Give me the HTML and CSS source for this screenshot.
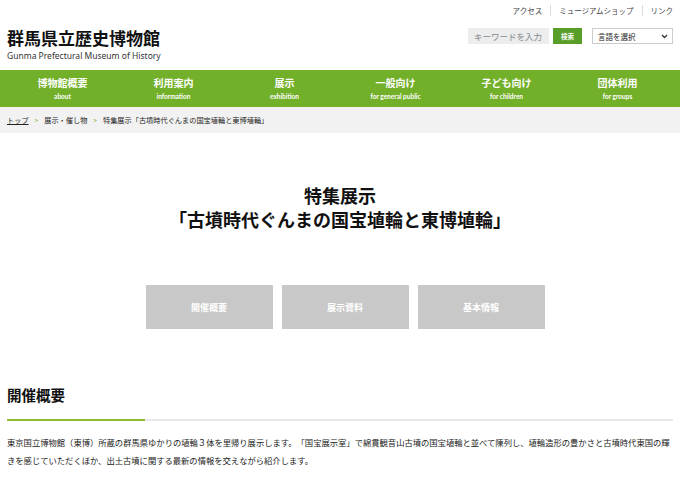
FILE: index.html
```html
<!DOCTYPE html>
<html lang="ja">
<head>
<meta charset="utf-8">
<title>群馬県立歴史博物館</title>
<link rel="stylesheet" href="styles.css">
</head>
<body>
<header class="site-header">
  <div class="logo">
    <div class="logo-ja">群馬県立歴史博物館</div>
    <div class="logo-en">Gunma Prefectural Museum of History</div>
  </div>
  <div class="header-right">
    <ul class="util-links">
      <li>アクセス</li>
      <li>ミュージアムショップ</li>
      <li>リンク</li>
    </ul>
    <div class="tools">
      <div class="search-box">キーワードを入力</div>
      <div class="search-btn">検索</div>
      <div class="lang-select"><span>言語を選択</span><svg width="7" height="5" viewBox="0 0 7 5"><path d="M1 1 L3.5 3.5 L6 1" fill="none" stroke="#333" stroke-width="1.3"/></svg></div>
    </div>
  </div>
</header>
<nav class="gnav">
  <div class="gnav-item"><span class="ja">博物館概要</span><span class="en">about</span></div>
  <div class="gnav-item"><span class="ja">利用案内</span><span class="en">information</span></div>
  <div class="gnav-item"><span class="ja">展示</span><span class="en">exhibition</span></div>
  <div class="gnav-item"><span class="ja">一般向け</span><span class="en">for general public</span></div>
  <div class="gnav-item"><span class="ja">子ども向け</span><span class="en">for children</span></div>
  <div class="gnav-item"><span class="ja">団体利用</span><span class="en">for groups</span></div>
</nav>
<div class="breadcrumb">
  <span class="bc-link">トップ</span><span class="bc-sep">&gt;</span><span>展示・催し物</span><span class="bc-sep">&gt;</span><span>特集展示「古墳時代ぐんまの国宝埴輪と東博埴輪」</span>
</div>
<main>
  <h1 class="page-title">特集展示<br>「古墳時代ぐんまの国宝埴輪と東博埴輪」</h1>
  <div class="tabs">
    <div class="tab">開催概要</div>
    <div class="tab">展示資料</div>
    <div class="tab">基本情報</div>
  </div>
  <section class="section">
    <h2 class="section-title">開催概要</h2>
    <div class="section-rule"><span class="rule-accent"></span></div>
    <p class="section-text">東京国立博物館（東博）所蔵の群馬県ゆかりの埴輪３体を里帰り展示します。「国宝展示室」で綿貫観音山古墳の国宝埴輪と並べて陳列し、埴輪造形の豊かさと古墳時代東国の輝きを感じていただくほか、出土古墳に関する最新の情報を交えながら紹介します。</p>
  </section>
</main>
</body>
</html>
```
FILE: styles.css
```css
* { box-sizing: border-box; }
body {
  margin: 0;
  font-family: "Noto Sans CJK JP", "Noto Sans", sans-serif;
  color: #222;
  background: #fff;
  text-spacing-trim: space-all;
}
.site-header {
  height: 70px;
  padding: 0 7px;
  display: flex;
  justify-content: space-between;
}
.logo { padding-top: 28px; }
.logo-ja {
  font-size: 17px;
  font-weight: 700;
  line-height: 20px;
  color: #111;
}
.logo-en {
  font-family: "Noto Sans", sans-serif;
  font-size: 8.5px;
  line-height: 12px;
  margin-top: 2px;
  color: #333;
  letter-spacing: 0;
}
.header-right {
  display: flex;
  flex-direction: column;
  align-items: flex-end;
}
.util-links {
  list-style: none;
  margin: 0;
  padding: 5px 0 0;
  display: flex;
  font-size: 7.5px;
  line-height: 11px;
  color: #444;
}
.util-links li { padding: 0 8px; border-left: 1px solid #ddd; }
.util-links li:first-child { border-left: 0; }
.util-links li:last-child { padding-right: 0; }
.tools {
  display: flex;
  align-items: center;
  margin-top: 12px;
}
.search-box {
  width: 81px;
  height: 16px;
  background: #ebedef;
  color: #888;
  font-size: 8.5px;
  line-height: 16px;
  padding-left: 6px;
}
.search-btn {
  width: 29px;
  height: 16px;
  margin-left: 4px;
  background: #5a9e2a;
  color: #fff;
  font-size: 6.5px;
  font-weight: 700;
  line-height: 16px;
  text-align: center;
}
.lang-select {
  width: 81px;
  height: 16px;
  margin-left: 10px;
  border: 1px solid #ccc;
  display: flex;
  align-items: center;
  justify-content: space-between;
  padding: 0 4px 0 5px;
  font-size: 7.5px;
  color: #222;
}
.gnav {
  height: 37px;
  background: #73b02a;
  display: grid;
  grid-template-columns: repeat(6, 1fr);
  padding: 0 7px;
}
.gnav-item {
  display: flex;
  flex-direction: column;
  align-items: center;
  justify-content: center;
  color: #fff;
}
.gnav-item .ja { font-size: 10px; font-weight: 700; line-height: 14px; }
.gnav-item .en { font-family: "Lato", sans-serif; font-size: 6.5px; line-height: 10px; margin-top: 2px; font-weight: 700; }
.breadcrumb {
  height: 26px;
  background: #f2f2f2;
  padding: 0 7px;
  display: flex;
  align-items: center;
  font-size: 7.2px;
  color: #222;
}
.bc-link { text-decoration: underline; }
.bc-sep { color: #73b02a; margin: 0 6px; font-size: 6.5px; }
main { padding: 0 7px; }
.page-title {
  margin: 50px 0 0;
  text-align: center;
  font-size: 18px;
  font-weight: 700;
  line-height: 24px;
  color: #111;
}
.tabs {
  display: flex;
  justify-content: center;
  gap: 9px;
  margin: 54px 0 0 10px;
}
.tab {
  width: 127px;
  height: 44px;
  background: #c8c8c8;
  color: #fff;
  font-size: 9px;
  font-weight: 700;
  display: flex;
  align-items: center;
  justify-content: center;
}
.section { margin-top: 55px; }
.section-title {
  margin: 0;
  font-size: 14.5px;
  font-weight: 700;
  line-height: 22px;
  color: #111;
}
.section-rule {
  margin-top: 13px;
  height: 2px;
  background: #e8e8e8;
}
.rule-accent {
  display: block;
  width: 138px;
  height: 2px;
  background: #8fbe2c;
}
.section-text {
  margin: 12px 0 0;
  font-size: 8.3px;
  line-height: 18px;
  color: #222;
}
```
